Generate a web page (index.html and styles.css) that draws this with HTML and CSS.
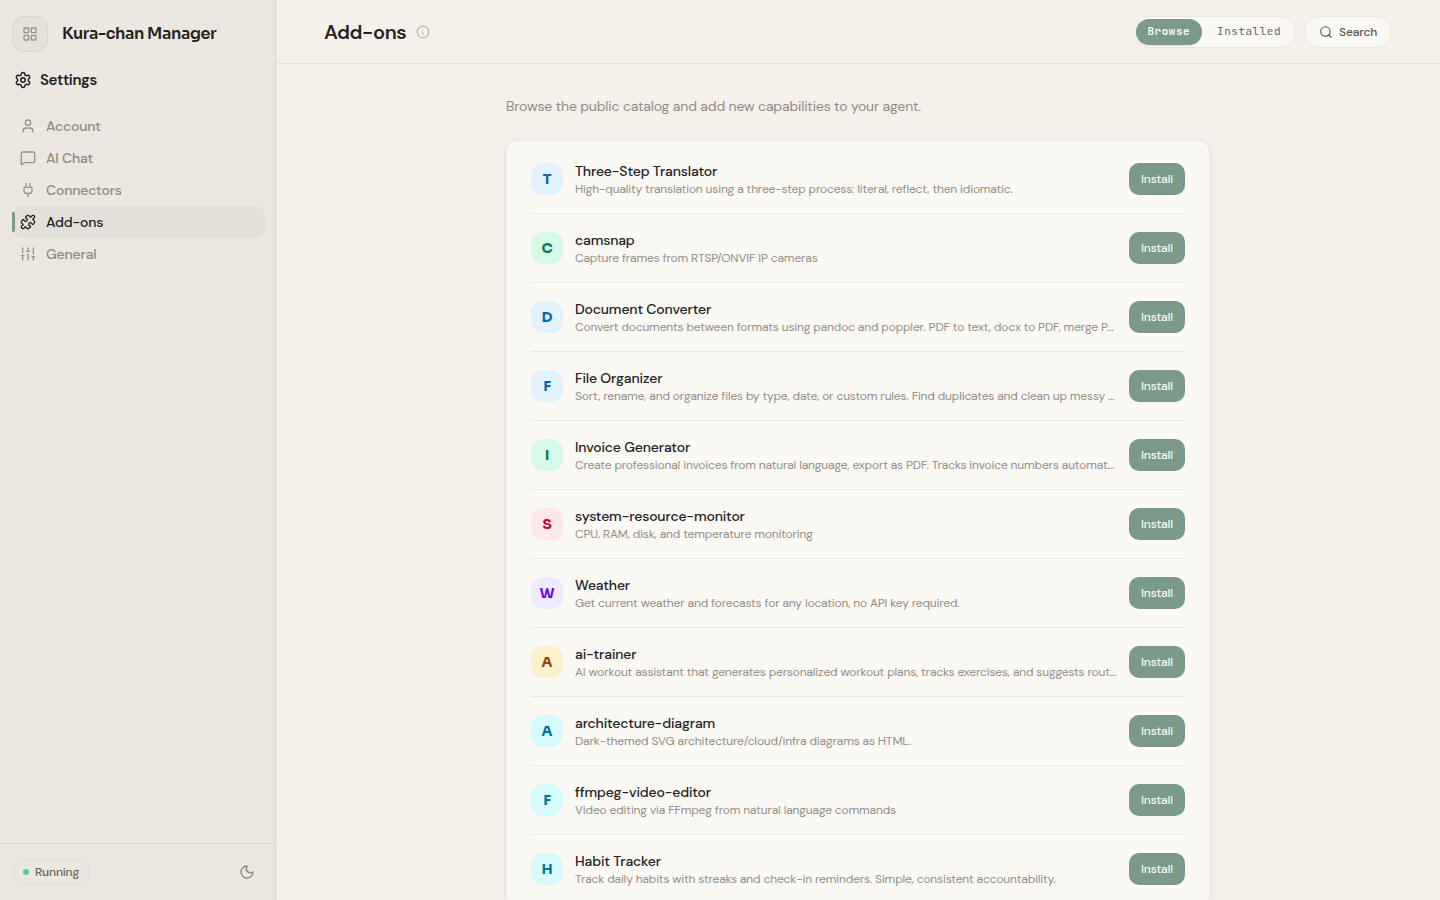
FILE: index.html
```html
<!DOCTYPE html>
<html lang="en">
<head>
<meta charset="utf-8">
<title>Add-ons</title>
<link rel="stylesheet" href="styles.css">
</head>
<body>
<div class="app">
  <aside class="sidebar">
    <div class="brand">
      <div class="brand-icon"><svg class="icon" width="16" height="16" viewBox="0 0 24 24"><rect x="3" y="3" width="7" height="7" rx="1"/><rect x="14" y="3" width="7" height="7" rx="1"/><rect x="14" y="14" width="7" height="7" rx="1"/><rect x="3" y="14" width="7" height="7" rx="1"/></svg></div>
      <span class="brand-name">Kura-chan Manager</span>
    </div>
    <div class="section"><svg class="icon" width="18" height="18" viewBox="0 0 24 24"><path d="M9.671 4.136a2.34 2.34 0 0 1 4.659 0 2.34 2.34 0 0 0 3.319 1.915 2.34 2.34 0 0 1 2.33 4.033 2.34 2.34 0 0 0 0 3.831 2.34 2.34 0 0 1-2.33 4.033 2.34 2.34 0 0 0-3.319 1.915 2.34 2.34 0 0 1-4.659 0 2.34 2.34 0 0 0-3.32-1.915 2.34 2.34 0 0 1-2.33-4.033 2.34 2.34 0 0 0 0-3.831A2.34 2.34 0 0 1 6.35 6.051a2.34 2.34 0 0 0 3.319-1.915"/><circle cx="12" cy="12" r="3"/></svg><span>Settings</span></div>
    <nav class="nav">
      <a class="nav-item"><svg class="icon" width="16" height="16" viewBox="0 0 24 24"><path d="M19 21v-2a4 4 0 0 0-4-4H9a4 4 0 0 0-4 4v2"/><circle cx="12" cy="7" r="4"/></svg><span>Account</span></a>
      <a class="nav-item"><svg class="icon" width="16" height="16" viewBox="0 0 24 24"><path d="M22 17a2 2 0 0 1-2 2H6.828a2 2 0 0 0-1.414.586l-2.202 2.202A.71.71 0 0 1 2 21.286V5a2 2 0 0 1 2-2h16a2 2 0 0 1 2 2z"/></svg><span>AI Chat</span></a>
      <a class="nav-item"><svg class="icon" width="16" height="16" viewBox="0 0 24 24"><path d="M12 22v-5"/><path d="M15 8V2"/><path d="M17 8a1 1 0 0 1 1 1v4a4 4 0 0 1-4 4h-4a4 4 0 0 1-4-4V9a1 1 0 0 1 1-1z"/><path d="M9 8V2"/></svg><span>Connectors</span></a>
      <a class="nav-item active"><svg class="icon" width="16" height="16" viewBox="0 0 24 24"><path d="M15.39 4.39a1 1 0 0 0 1.68-.474 2.5 2.5 0 1 1 3.014 3.015 1 1 0 0 0-.474 1.68l1.683 1.682a2.414 2.414 0 0 1 0 3.414L19.61 15.39a1 1 0 0 1-1.68-.474 2.5 2.5 0 1 0-3.014 3.015 1 1 0 0 1 .474 1.68l-1.683 1.682a2.414 2.414 0 0 1-3.414 0L8.61 19.61a1 1 0 0 0-1.68.474 2.5 2.5 0 1 1-3.014-3.015 1 1 0 0 0 .474-1.68l-1.683-1.682a2.414 2.414 0 0 1 0-3.414L4.39 8.61a1 1 0 0 1 1.68.474 2.5 2.5 0 1 0 3.014-3.015 1 1 0 0 1-.474-1.68l1.683-1.682a2.414 2.414 0 0 1 3.414 0z"/></svg><span>Add-ons</span></a>
      <a class="nav-item"><svg class="icon" width="16" height="16" viewBox="0 0 24 24"><path d="M4 21v-7M4 10V3M12 21v-9M12 8V3M20 21v-5M20 12V3M2 14h4M10 8h4M18 16h4"/></svg><span>General</span></a>
    </nav>
    <div class="side-foot">
      <div class="status"><i class="dot"></i><span>Running</span></div>
      <svg class="icon moon" width="16" height="16" viewBox="0 0 24 24"><path d="M20.985 12.486a9 9 0 1 1-9.473-9.472c.405-.022.617.46.402.803a6 6 0 0 0 8.268 8.268c.344-.215.825-.004.803.401"/></svg>
    </div>
  </aside>
  <main class="main">
    <header class="topbar">
      <h1 class="title">Add-ons</h1>
      <svg class="icon info" width="14" height="14" viewBox="0 0 24 24"><circle cx="12" cy="12" r="10"/><path d="M12 16v-4M12 8h.01"/></svg>
      <div class="tabs"><span class="tab tab-on">Browse</span><span class="tab">Installed</span></div>
      <div class="search"><svg class="icon" width="14" height="14" viewBox="0 0 24 24"><circle cx="11" cy="11" r="8"/><path d="m21 21-4.34-4.34"/></svg><span>Search</span></div>
    </header>
    <div class="content">
      <p class="lead">Browse the public catalog and add new capabilities to your agent.</p>
      <div class="card">
        <div class="row"><div class="avatar sky">T</div><div class="info-col"><div class="name">Three-Step Translator</div><div class="desc">High-quality translation using a three-step process: literal, reflect, then idiomatic.</div></div><button class="install">Install</button></div>
        <div class="row"><div class="avatar green">C</div><div class="info-col"><div class="name">camsnap</div><div class="desc">Capture frames from RTSP/ONVIF IP cameras</div></div><button class="install">Install</button></div>
        <div class="row"><div class="avatar sky">D</div><div class="info-col"><div class="name">Document Converter</div><div class="desc">Convert documents between formats using pandoc and poppler. PDF to text, docx to PDF, merge P…</div></div><button class="install">Install</button></div>
        <div class="row"><div class="avatar sky">F</div><div class="info-col"><div class="name">File Organizer</div><div class="desc">Sort, rename, and organize files by type, date, or custom rules. Find duplicates and clean up messy …</div></div><button class="install">Install</button></div>
        <div class="row"><div class="avatar green">I</div><div class="info-col"><div class="name">Invoice Generator</div><div class="desc">Create professional invoices from natural language, export as PDF. Tracks invoice numbers automat…</div></div><button class="install">Install</button></div>
        <div class="row"><div class="avatar rose">S</div><div class="info-col"><div class="name">system-resource-monitor</div><div class="desc">CPU, RAM, disk, and temperature monitoring</div></div><button class="install">Install</button></div>
        <div class="row"><div class="avatar violet">W</div><div class="info-col"><div class="name">Weather</div><div class="desc">Get current weather and forecasts for any location, no API key required.</div></div><button class="install">Install</button></div>
        <div class="row"><div class="avatar amber">A</div><div class="info-col"><div class="name">ai-trainer</div><div class="desc">AI workout assistant that generates personalized workout plans, tracks exercises, and suggests rout…</div></div><button class="install">Install</button></div>
        <div class="row"><div class="avatar cyan">A</div><div class="info-col"><div class="name">architecture-diagram</div><div class="desc">Dark-themed SVG architecture/cloud/infra diagrams as HTML.</div></div><button class="install">Install</button></div>
        <div class="row"><div class="avatar cyan">F</div><div class="info-col"><div class="name">ffmpeg-video-editor</div><div class="desc">Video editing via FFmpeg from natural language commands</div></div><button class="install">Install</button></div>
        <div class="row"><div class="avatar cyan">H</div><div class="info-col"><div class="name">Habit Tracker</div><div class="desc">Track daily habits with streaks and check-in reminders. Simple, consistent accountability.</div></div><button class="install">Install</button></div>
      </div>
    </div>
  </main>
</div>
</body>
</html>
```

FILE: styles.css
```css
* { box-sizing: border-box; }
body { margin: 0; font-family: "DM Sans", Inter, sans-serif; letter-spacing: -0.16px; color: #24211f; background: #f5f0ea; }
.app { display: flex; height: 900px; overflow: hidden; }
.icon { display: block; flex: none; fill: none; stroke: currentColor; stroke-width: 2; stroke-linecap: round; stroke-linejoin: round; }

.sidebar { width: 276px; flex: none; display: flex; flex-direction: column; background: #ece7df; border-right: 1px solid #dad6cf; }
.brand { display: flex; align-items: center; gap: 14px; padding: 16px 12px 0; }
.brand-icon { width: 36px; height: 36px; display: grid; place-items: center; border: 1px solid #d8d5cc; border-radius: 12px; background: #e5e1d9; color: #9a9488; }
.brand-name { font-family: Sora, "DM Sans", Inter, sans-serif; font-size: 16px; font-weight: 600; letter-spacing: -0.4px; line-height: 24px; }
.section { display: flex; align-items: center; gap: 8px; height: 24px; margin-top: 16px; padding-left: 14px; font-size: 15px; font-weight: 600; letter-spacing: -0.375px; }
.nav { margin-top: 18px; padding: 0 10px 0 12px; display: flex; flex-direction: column; }
.nav-item { display: flex; align-items: center; gap: 10px; height: 32px; padding-left: 8px; border-radius: 10px; font-size: 14px; font-weight: 500; color: #918b81; }
.nav-item .icon { color: #9a9488; }
.active { position: relative; color: #24211f; background: #e3e0d8; }
.nav-item.active .icon { color: #24211f; }
.active::before { content: ""; position: absolute; left: 0; top: 6px; width: 3px; height: 20px; border-radius: 0 2px 2px 0; background: #7b9a89; }
.side-foot { margin-top: auto; height: 57px; display: flex; align-items: center; justify-content: space-between; padding: 0 20px 0 12px; border-top: 1px solid #d9d5cd; }
.status { display: flex; align-items: center; gap: 6px; width: 78px; height: 26px; padding-left: 10px; border: 1px solid #dfdad3; border-radius: 13px; font-size: 12px; font-weight: 500; color: #69645e; }
.dot { width: 6px; height: 6px; border-radius: 50%; background: #4fcf9c; }
.moon { color: #8f897d; }

.main { flex: 1; min-width: 0; }
.topbar { display: flex; align-items: center; height: 64px; padding: 0 48px; border-bottom: 1px solid #e6e2dc; }
.title { margin: 0; font-size: 20px; font-weight: 600; letter-spacing: -0.4px; line-height: 28px; }
.info { margin-left: 10px; color: #bcb7b0; }
.tabs { display: flex; align-items: center; margin-left: auto; height: 32px; padding: 2px; border: 1px solid #ebe8e2; border-radius: 16px; background: #faf9f4; }
.tab { height: 26px; line-height: 24px; padding: 0 12px 0 15px; border-radius: 13px; font-family: "JetBrains Mono", "Liberation Mono", monospace; font-size: 11px; letter-spacing: 0.5px; color: #69645e; }
.tab-on { padding: 0 12px 0 11px; background: #7b9a89; color: #faf9f4; font-weight: 700; box-shadow: 0 1px 2px rgba(0,0,0,.1); }
.search { display: flex; align-items: center; gap: 6px; margin-left: 8px; width: 88px; height: 32px; padding-left: 14px; border: 1px solid #ebe8e2; border-radius: 16px; background: #faf9f4; font-size: 12px; font-weight: 500; color: #5d5852; }
.content { width: 704px; margin: 0 auto; padding-top: 32px; }
.lead { margin: 0; font-size: 14px; line-height: 20px; color: #918b84; }
.card { margin-top: 24px; padding: 4px 24px; border: 1px solid #efebe5; border-radius: 12px; background: #faf9f4; box-shadow: 0 1px 6px rgba(60,40,20,.07); }
.row { display: flex; align-items: center; gap: 12px; height: 69px; border-bottom: 1px solid #eae8e3; }
.avatar { width: 32px; height: 32px; flex: none; display: grid; place-items: center; border-radius: 12px; font-family: Sora, "DM Sans", Inter, sans-serif; font-size: 14px; font-weight: 700; }
.sky { background: #e2f3fd; color: #0369a8; }
.green { background: #d7fae8; color: #047a55; }
.rose { background: #ffe8ea; color: #c70039; }
.violet { background: #efeafd; color: #7008e7; }
.amber { background: #fcf1cd; color: #9a4500; }
.cyan { background: #d6fafe; color: #007595; }
.info-col { flex: 1; min-width: 0; white-space: nowrap; }
.name { font-size: 14px; font-weight: 500; line-height: 20px; }
.desc { font-size: 12px; line-height: 16px; color: #938d86; }
.install { width: 56px; height: 32px; padding: 0; border: 0; border-radius: 10px; background: #7b9a89; color: #faf9f4; font: 500 12px "DM Sans", Inter, sans-serif; letter-spacing: -0.16px; }
```
